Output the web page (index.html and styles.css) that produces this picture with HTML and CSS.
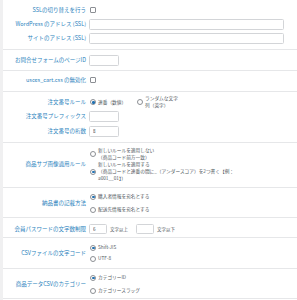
FILE: index.html
```html
<!DOCTYPE html>
<html lang="ja">
<head>
  <meta charset="UTF-8" />
  <title>システム設定</title>
  <meta name="viewport" content="width=device-width, initial-scale=1" />
  <link rel="stylesheet" href="styles.css">
</head>
<body>
  <div class="wrap">

    <!-- SSL -->
    <div class="sec s1">
      <div class="row h14">
        <div class="lbl">SSLの切り替えを行う</div>
        <input type="checkbox" class="chk" />
      </div>
      <div class="row h14">
        <div class="lbl">WordPress のアドレス (SSL)</div>
        <input type="text" class="txt long" />
      </div>
      <div class="row h14">
        <div class="lbl">サイトのアドレス (SSL)</div>
        <input type="text" class="txt long" />
      </div>
    </div>

    <div class="sec s2">
      <div class="row h12">
        <div class="lbl">お問合せフォームのページID</div>
        <input type="text" class="txt short" />
      </div>
    </div>

    <div class="sec s3">
      <div class="row h12">
        <div class="lbl">usces_cart.css の無効化</div>
        <input type="checkbox" class="chk" />
      </div>
    </div>

    <!-- 注文番号 -->
    <div class="sec s4">
      <div class="row h14">
        <div class="lbl">注文番号ルール</div>
        <label class="opt first"><input type="radio" name="order_rule" class="rad" checked /><span>連番（数値）</span></label>
        <label class="opt"><input type="radio" name="order_rule" class="rad" /><span>ランダムな文字<br>列（英字）</span></label>
      </div>
      <div class="row h15">
        <div class="lbl">注文番号プレフィックス</div>
        <input type="text" class="txt short" />
      </div>
      <div class="row h14">
        <div class="lbl">注文番号の桁数</div>
        <input type="text" class="txt short" value="8" />
      </div>
    </div>

    <div class="sec s5">
      <div class="row">
        <div class="lbl">商品サブ画像適用ルール</div>
        <div class="opts">
          <label class="opt"><input type="radio" name="subimg" class="rad" /><span>新しいルールを適用しない<br>（商品コード前方一致）</span></label>
          <label class="opt"><input type="radio" name="subimg" class="rad" checked /><span>新しいルールを適用する<br>（商品コードと連番の間に_（アンダースコア）を2つ書く【例：<br>a001__01】）</span></label>
        </div>
      </div>
    </div>

    <div class="sec s6">
      <div class="row">
        <div class="lbl">納品書の記載方法</div>
        <div class="opts">
          <label class="opt h13"><input type="radio" name="delivery" class="rad" checked /><span>購入者情報を宛名とする</span></label>
          <label class="opt h13"><input type="radio" name="delivery" class="rad" /><span>配送先情報を宛名とする</span></label>
        </div>
      </div>
    </div>

    <div class="sec s7">
      <div class="row h12">
        <div class="lbl">会員パスワードの文字数制限</div>
        <input type="text" class="txt tiny" value="6" />
        <span class="unit">文字以上</span>
        <input type="text" class="txt tiny" />
        <span class="unit">文字以下</span>
      </div>
    </div>

    <div class="sec s8">
      <div class="row">
        <div class="lbl">CSVファイルの文字コード</div>
        <div class="opts">
          <label class="opt h11"><input type="radio" name="csv_enc" class="rad" checked /><span>Shift-JIS</span></label>
          <label class="opt h11"><input type="radio" name="csv_enc" class="rad" /><span>UTF-8</span></label>
        </div>
      </div>
    </div>

    <div class="sec s9">
      <div class="row">
        <div class="lbl">商品データCSVのカテゴリー</div>
        <div class="opts">
          <label class="opt h13"><input type="radio" name="csv_cat" class="rad" checked /><span>カテゴリーID</span></label>
          <label class="opt h13"><input type="radio" name="csv_cat" class="rad" /><span>カテゴリースラッグ</span></label>
        </div>
      </div>
    </div>

  </div>
</body>
</html>
```

FILE: styles.css
```css
body {
  margin: 0;
  background: #f0f0f1;
  font-family: "Noto Sans CJK JP", "Noto Sans", sans-serif;
  color: #50575e;
}
.wrap {
  margin-left: 3px;
  background: #fff;
  height: 300px;
  overflow: hidden;
}
.sec {
  border-bottom: 1px solid #e6e7e9;
}
.s1 { padding: 3px 0 4px; }
.s2 { padding: 4px 0 4px; }
.s3 { padding: 3px 0 5px; }
.s4 { padding: 3px 0 4px; }
.s5 { padding: 4px 0 5px; }
.s6 { padding: 2px 0 1px; }
.s7 { padding: 5px 0 2px; }
.s8 { padding: 4px 0 4px; }
.s9 { padding: 2px 0 1px; }

.row {
  display: flex;
  align-items: center;
}
.h11 { height: 11px; }
.h12 { height: 12px; }
.h13 { height: 13px; }
.h14 { height: 14px; }
.h15 { height: 15px; }

.lbl {
  flex: none;
  width: 86px;
  box-sizing: border-box;
  padding-right: 3px;
  text-align: right;
  font-size: 5.5px;
  line-height: 7px;
  color: #2c83bd;
  white-space: nowrap;
}

.txt {
  box-sizing: border-box;
  margin: 0;
  height: 11px;
  padding: 0 0 0 3px;
  border: 1px solid #d3d5d8;
  border-radius: 1.5px;
  background: #fff;
  font-family: inherit;
  font-size: 4.5px;
  color: #333;
  outline: none;
}
.long { width: 195px; }
.short { width: 30px; }
.tiny { width: 18px; height: 10px; }

.unit {
  font-size: 4.5px;
  color: #50575e;
  margin: 0 8px 0 3px;
}

.chk, .rad {
  appearance: none;
  box-sizing: border-box;
  flex: none;
  width: 6px;
  height: 6px;
  margin: 0 0 0 1px;
  border: 0.6px solid #8c8f94;
  background: #fff;
}
.chk { border-radius: 1px; }
.rad { border-radius: 50%; position: relative; }
.rad:checked::after {
  content: "";
  position: absolute;
  left: 1.2px;
  top: 1.2px;
  width: 2.4px;
  height: 2.4px;
  border-radius: 50%;
  background: #2271b1;
}

.opts {
  display: flex;
  flex-direction: column;
}
.opt {
  display: flex;
  align-items: center;
  font-size: 4.7px;
  line-height: 7px;
  color: #50575e;
  white-space: nowrap;
}
.opt span {
  margin-left: 2px;
}
.opt.first {
  width: 47px;
}
```
